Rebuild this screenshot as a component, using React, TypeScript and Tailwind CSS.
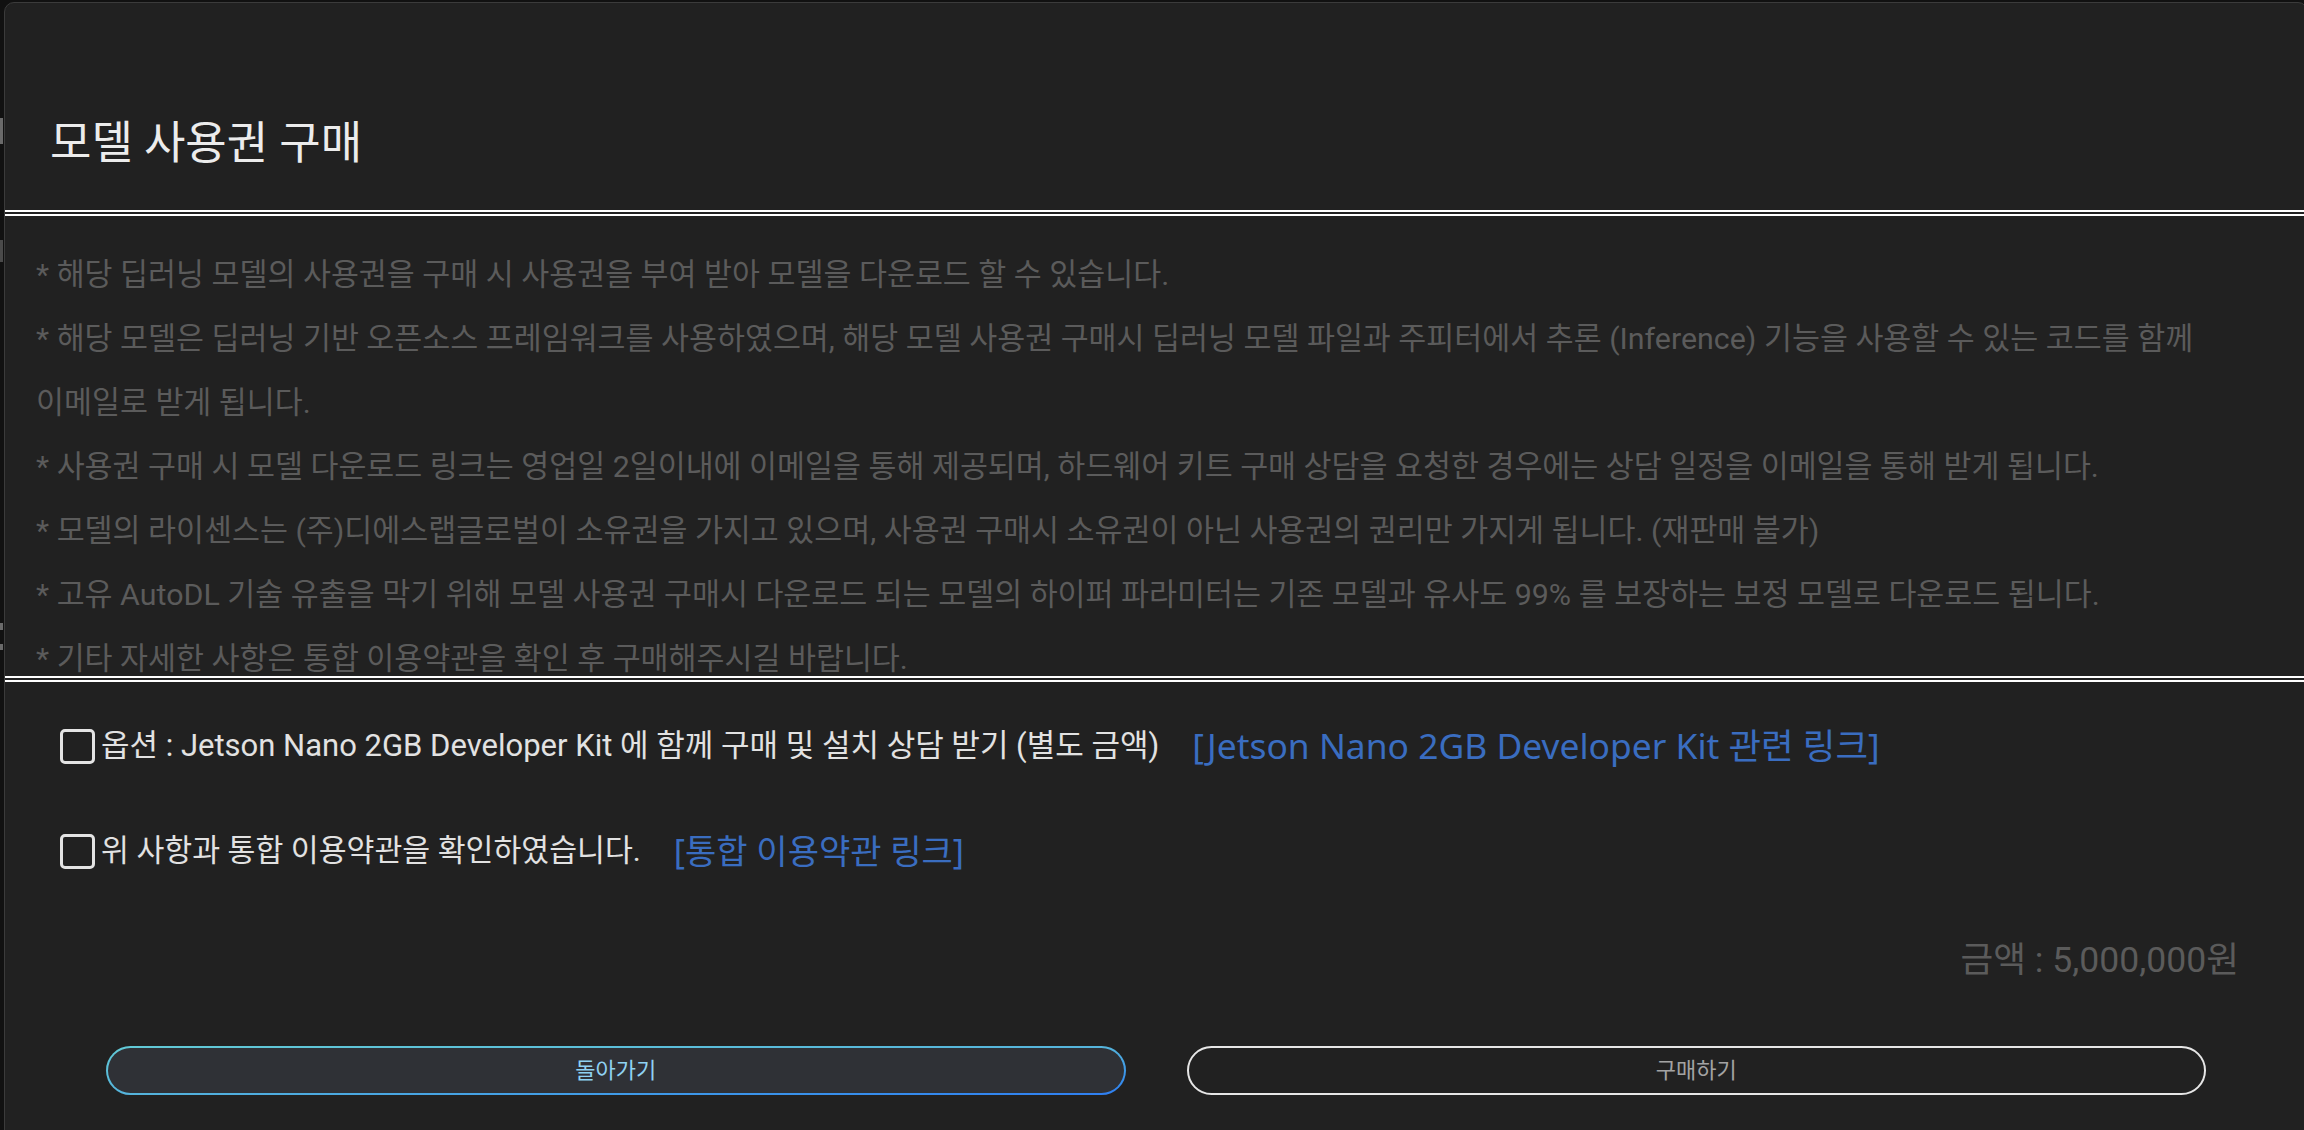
const notices = [
  '* 해당 딥러닝 모델의 사용권을 구매 시 사용권을 부여 받아 모델을 다운로드 할 수 있습니다.',
  '* 해당 모델은 딥러닝 기반 오픈소스 프레임워크를 사용하였으며, 해당 모델 사용권 구매시 딥러닝 모델 파일과 주피터에서 추론 (Inference) 기능을 사용할 수 있는 코드를 함께',
  '이메일로 받게 됩니다.',
  '* 사용권 구매 시 모델 다운로드 링크는 영업일 2일이내에 이메일을 통해 제공되며, 하드웨어 키트 구매 상담을 요청한 경우에는 상담 일정을 이메일을 통해 받게 됩니다.',
  '* 모델의 라이센스는 (주)디에스랩글로벌이 소유권을 가지고 있으며, 사용권 구매시 소유권이 아닌 사용권의 권리만 가지게 됩니다. (재판매 불가)',
  '* 고유 AutoDL 기술 유출을 막기 위해 모델 사용권 구매시 다운로드 되는 모델의 하이퍼 파라미터는 기존 모델과 유사도 99% 를 보장하는 보정 모델로 다운로드 됩니다.',
  '* 기타 자세한 사항은 통합 이용약관을 확인 후 구매해주시길 바랍니다.',
];

const Checkbox = () => (
  <span className="w-[35px] h-[35px] shrink-0 rounded-[5px] border-[3px] border-[#e4e4e4]" />
);

const linkFont = { fontFamily: '"Noto Sans", "Noto Sans CJK KR", sans-serif' };

export default function App() {
  return (
    <div
      className="relative w-[2304px] h-[1130px] overflow-hidden bg-[#111111] pt-[2px] pl-[4px]"
      style={{ fontFamily: 'Roboto, "Noto Sans CJK KR", sans-serif' }}
    >
      {/* bits of the page behind the dialog */}
      <span className="absolute left-0 top-[118px] w-[3px] h-[26px] bg-[#6a6a6a]" />
      <span className="absolute left-0 top-[240px] w-[3px] h-[22px] bg-[#4a4a4a]" />
      <span className="absolute left-0 top-[623px] w-[3px] h-[7px] bg-[#6a6a6a]" />
      <span className="absolute left-0 top-[644px] w-[3px] h-[6px] bg-[#6a6a6a]" />

      <div className="w-[2304px] h-[1140px] rounded-[10px] border border-[#3b3b3b] bg-[#212121] flex flex-col">
        {/* header */}
        <div className="h-[207px] shrink-0 pl-[45px] pt-[113px]">
          <h1 className="text-[45px] leading-[56px] text-[#ececec] font-normal">모델 사용권 구매</h1>
        </div>

        {/* notice box */}
        <div className="h-[472px] shrink-0 overflow-hidden border-y-[6px] border-double border-white pl-[31px] pt-[27px]">
          {notices.map((line) => (
            <p key={line} className="text-[30.4px] leading-[64px] text-[#5b5b5b] whitespace-nowrap">
              {line}
            </p>
          ))}
        </div>

        {/* agreements */}
        <div className="flex flex-col gap-[57px] pl-[55px] pt-[40px]">
          <label className="flex items-center h-[48px]">
            <Checkbox />
            <span className="ml-[6px] text-[31px] text-[#e2e2e2] whitespace-nowrap">
              옵션 : Jetson Nano 2GB Developer Kit 에 함께 구매 및 설치 상담 받기 (별도 금액)
            </span>
            <a className="ml-[33px] text-[35.4px] text-[#3a6dc0] whitespace-nowrap" style={linkFont}>
              [Jetson Nano 2GB Developer Kit 관련 링크]
            </a>
          </label>
          <label className="flex items-center h-[48px]">
            <Checkbox />
            <span className="ml-[6px] text-[30.3px] text-[#e2e2e2] whitespace-nowrap">
              위 사항과 통합 이용약관을 확인하였습니다.
            </span>
            <a className="ml-[33px] text-[34px] text-[#3a6dc0] whitespace-nowrap" style={linkFont}>
              [통합 이용약관 링크]
            </a>
          </label>
        </div>

        {/* price */}
        <div className="flex justify-end pr-[68px] mt-[63px]">
          <span className="text-[35.6px] leading-[44px] text-[#5b5b5b]">금액 : 5,000,000원</span>
        </div>

        {/* actions */}
        <div className="grid grid-cols-2 gap-[61px] pl-[101px] pr-[101px] mt-[64px]">
          <button className="h-[49px] rounded-full p-[2px] bg-linear-to-br from-[#62cad6] via-[#55b4dc] to-[#2e7df2]">
            <span className="flex h-full w-full items-center justify-center rounded-full bg-[#2f3136] text-[22px] text-[#8fd2f2]">
              돌아가기
            </span>
          </button>
          <button className="h-[49px] rounded-full border-2 border-[#e6e6e6] bg-[#212121] text-[22px] text-[#a3a3a3]">
            구매하기
          </button>
        </div>
      </div>
    </div>
  );
}
